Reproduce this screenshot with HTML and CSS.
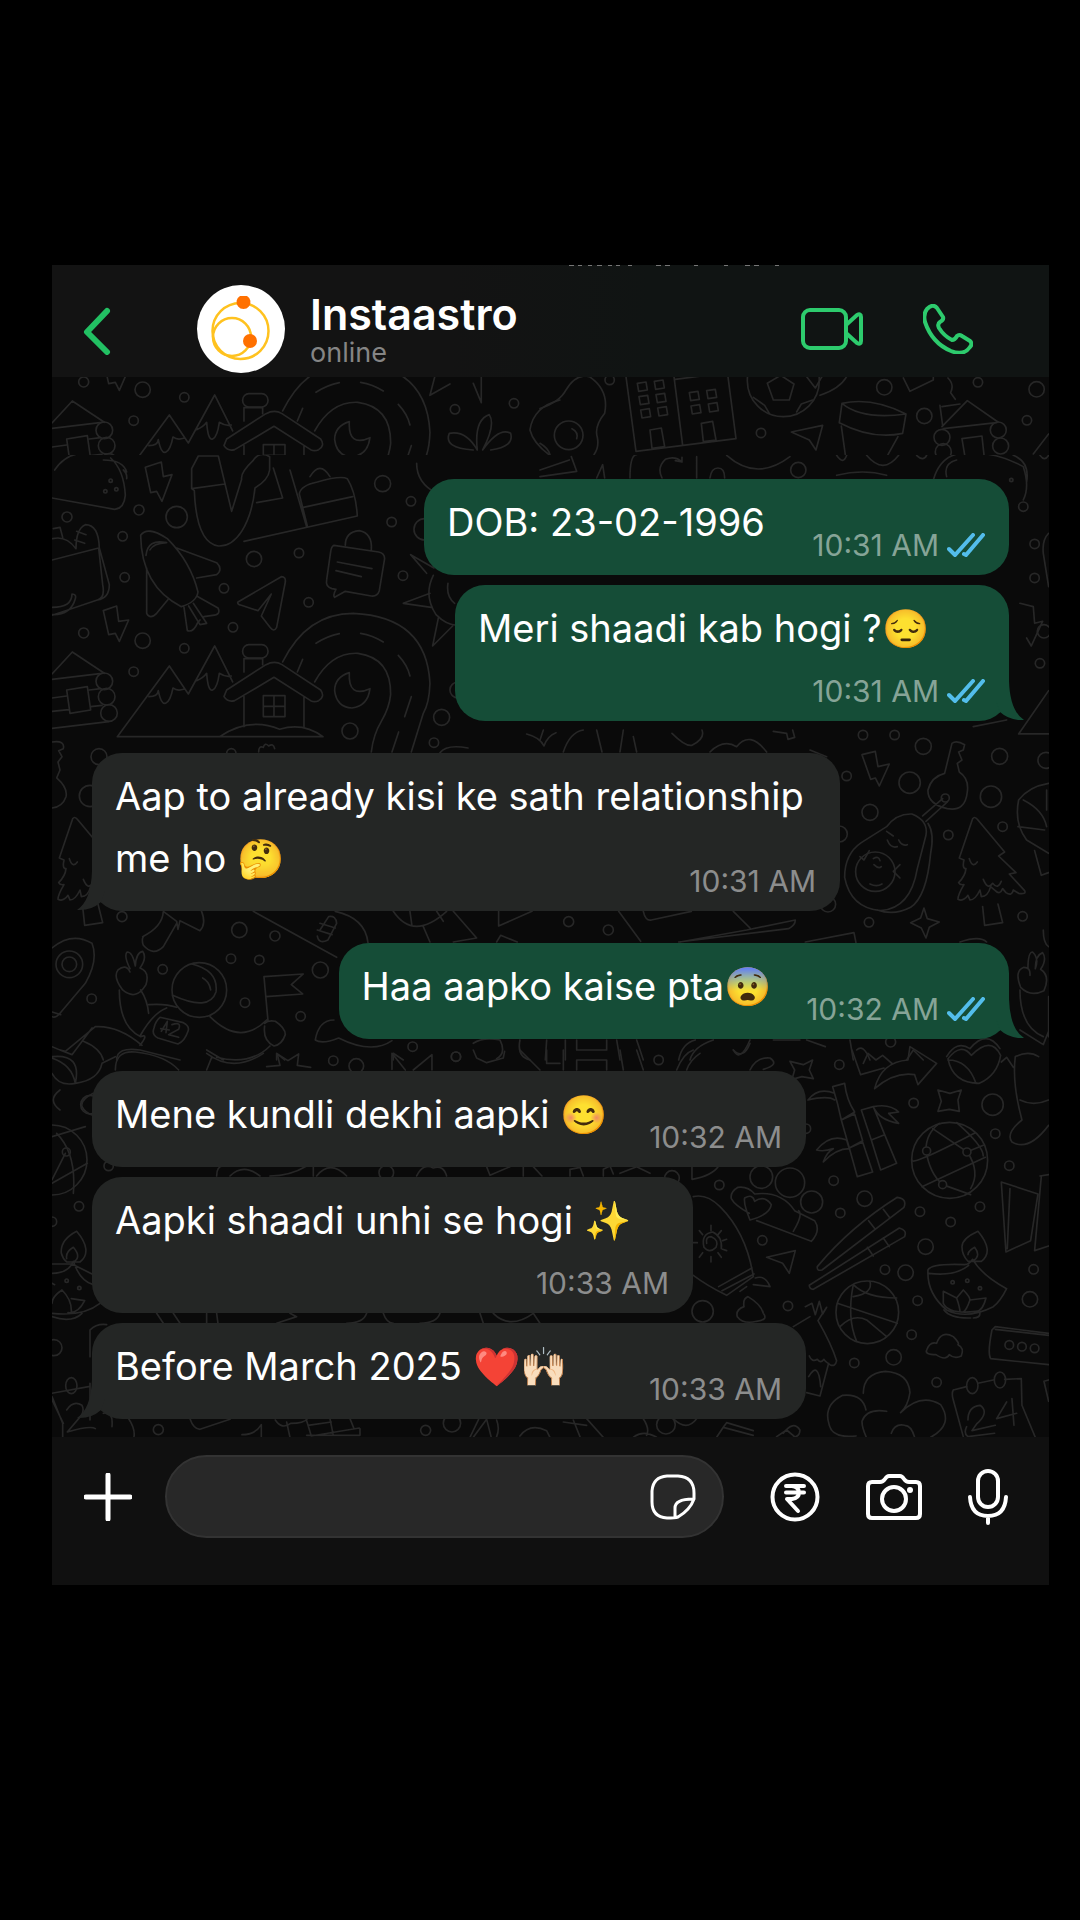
FILE: index.html
```html
<!DOCTYPE html>
<html lang="en">
<head>
  <meta charset="UTF-8" />
  <meta name="viewport" content="width=device-width, initial-scale=1.0" />
  <title>Instaastro</title>
  <link rel="stylesheet" href="styles.css">
</head>
<body>
  <main class="phone">
    <!-- Header -->
    <header class="header">
      <svg class="clipped" viewBox="0 0 212 1" aria-hidden="true"><path d="M1 .5h5m4 0h4m6 0h4m5 0h5m6 0h4m4 0h4m8 0h4m24 0h5m4 0h5m24 0h4m26 0h4m17 0h5m4 0h5m16 0h4" /></svg>
      <button class="icon-btn back" aria-label="Back">
        <svg width="28" height="52" viewBox="0 0 28 52"><path d="M24 8 4 29l20 20" /></svg>
      </button>
      <svg class="avatar" viewBox="0 0 88 88" role="img" aria-label="Instaastro logo">
        <circle cx="44" cy="44" r="44" fill="#fff" />
        <g fill="none" stroke="#ffc21f" stroke-width="2.5">
          <circle cx="43.500" cy="46" r="28" />
          <circle cx="35" cy="52" r="19" />
        </g>
        <path d="M43 11h7a7 7 0 1 1-7 0z" fill="#ff7000" />
        <circle cx="53" cy="56" r="7" fill="#ff7000" />
      </svg>
      <div class="who">
        <h1>Instaastro</h1>
        <p>online</p>
      </div>
      <button class="icon-btn" aria-label="Video call">
        <svg width="62" height="42" viewBox="0 0 62 42"><rect x="2" y="2" width="43" height="38" rx="7" /><path d="M45 17 56 7q4-2 4 2v24q0 4-4 2L45 25z" /></svg>
      </button>
      <button class="icon-btn call" aria-label="Voice call">
        <svg width="50" height="50" viewBox="0 0 50 50"><path d="M4 5Q10-1 14 4l6 9q1 3-3 5-3 2-1 6 5 8 13 12 3 0 5-4 2-2 5 0l8 5q3 3 0 6-6 9-19 4Q9 39 2 18 0 10 4 5z" /></svg>
      </button>
    </header>

    <!-- Conversation -->
    <section class="chat">
      <svg class="doodles" viewBox="52 377 997 1060" preserveAspectRatio="xMidYMin slice" aria-hidden="true">
        <defs>
          <clipPath id="top-strip"><rect x="52" y="377" width="997" height="78" /></clipPath>
          <clipPath id="main-area"><rect x="52" y="455" width="997" height="982" /></clipPath>
          <g id="village" transform="translate(40 470) scale(.3333)">
            <path d="M232 800 388 588l57 84 79-144 54 108M232 800h617q-60-44-130-22-90-38-180 22M327 680q26 0 28-18 8 42 22 38 14-6 22-46 12 10 32 4M470 632q20-8 30-22 4 56 18 50 14-6 20-50 18 12 36 8" />
            <path d="M612 680v90M792 680v92M612 606v-40h56v18M560 660l118-76q26-14 48 0l116 76q14 20-6 32-12 6-24 0L702 622 584 692q-20 6-32-12zM670 677h65v63h-65zM702 677v63M670 709h65" />
            <rect x="608" y="524" width="76" height="40" rx="19" />
            <path d="M728 576Q800 430 940 430q220 10 230 210-2 60-20 90l-36 116M824 636q50-90 130-86 100 14 98 124-4 40-28 80-24 40-30 92M828 520q34-22 70-29M962 490q36 6 68 26M1075 556q28 30 35 62M1114 680l-20 60M1076 786l-20 60M788 568l-16 38" />
            <path d="M928 608q-44 14-44 54 6 50 52 52 48-6 54-58-66 30-62-48z" />
            <path d="M36 612 97 546l96 64M36 628l150-18M36 775l170-20M80 660l62-10 10 70-62 10zM36 684l44-6M148 660l34-4M36 724l50-5M152 710l34-4" />
            <circle cx="193" cy="634" r="25" /><circle cx="200" cy="680" r="25" /><circle cx="207" cy="729" r="25" />
            <circle cx="308" cy="512" r="23" /><circle cx="131" cy="489" r="15" /><circle cx="433" cy="535" r="14" /><circle cx="281" cy="605" r="14" />
            <path d="m190 422 40-14 6 46 30-4-28 64-12-24-20 4z" />
          </g>
          <g id="tree">
            <path d="M58 384 98 266q6-8 14 2l82 98-18 12 52 50-20 4 46 50q6 12-18 8l-16-10q-4 20-22 8l-10-12q-8 20-22 6l-14-12q-8 30-28 30l-4-20q-14 30-30 30l-6-14q-14 20-30 12 0-14 18-44-12 2-16-6 20-20 22-42-12 0-6-26zM128 530l6 56 54-8-14-56M88 386q10 30 24 10M130 448q14 34 28 12 16 20 26-6" />
          </g>
        </defs>
        <g clip-path="url(#top-strip)">
          <use href="#village" y="-251" />
          <g transform="translate(540 250) scale(.3333)">
            <path d="m258 380 30 224 300-38-24-186M402 380l26 206M330 540l34-6 10 56-38 5zM484 520l34-6 10 56-38 5zM406 388l156-20" />
            <path d="m292 400 26-4 4 24-26 4zM343 394l26-4 4 24-26 4zM297 440l26-4 4 24-26 4zM348 434l26-4 4 24-26 4zM302 480l26-4 4 24-26 4zM353 474l26-4 4 24-26 4zM448 428l26-4 4 24-26 4zM500 422l26-4 4 24-26 4zM453 468l26-4 4 24-26 4zM505 462l26-4 4 24-26 4z" />
            <circle cx="730" cy="392" r="108" /><path d="m682 400 40-24 40 26-14 48h-48zM640 442l34 24 14 24M770 486l14-24 34-12M800 380l26 34 20-34M840 436q60-20 80-56" />
            <path d="M0 476q60-20 78-56 30-50 70-40 60 40 46 110-32 40-22 72 6 30-10 52M0 580q24 14 30 34" /><circle cx="86" cy="556" r="43" /><path d="M96 536q20 10 14 30" />
            <path d="M906 460q90-20 192 32l-10 58q-90 20-190-32zM906 460q60 50 192 32M904 528l12 86M1074 560l-30 54M754 546l94-20-20 74-20-30zM1090 384l20 40 70-34v-10M1224 384q20 20 8 44l14 20" />
            <path d="m1206 530 76-78 92 64M1210 536l160-18M1206 470l54-8M1266 566l60-8 6 56M1266 566l8 48M1200 466l8 60M1480 612l46-60" />
            <circle cx="1206" cy="562" r="24" /><circle cx="1375" cy="540" r="24" /><circle cx="1382" cy="588" r="24" /><circle cx="1210" cy="605" r="24" />
            <circle cx="209" cy="390" r="14" /><circle cx="663" cy="549" r="14" /><circle cx="1033" cy="412" r="23" /><circle cx="1153" cy="498" r="23" /><circle cx="1314" cy="397" r="14" /><circle cx="1461" cy="511" r="14" /><circle cx="1490" cy="418" r="23" />
          </g>
          <g transform="translate(40 250) scale(.3333)">
            <path d="m1184 382-14 54 60-34M1300 400l24 58V382M1300 600q-90-6-72-50 50-10 84 50-10-90 36-106 20 30-20 106 50-70 84-50 12 40-60 50M1560 450q-80 20-90 90 10 40 60 76" />
            <circle cx="1245" cy="478" r="14" /><circle cx="1422" cy="460" r="14" />
          </g>
        </g>
        <g clip-path="url(#main-area)">
          <use href="#village" />
          <!-- left edge: food, tools and the rocket -->
          <g transform="translate(40 470) scale(.3333)">
            <path d="M36 84 224 118q28-2 32-42-4-76-44-112M44 0q40-60 110-48M250 0q12 10 10 26M190-30q60 0 70 36M316-8l48-16 6 44 26-6-30 80-16-30-18 4z" />
            <path d="M455 56v-60l20-38h60l40 166 30-96q-4-20 34-56 20-30 50-12v40q-4 30-44 54-8 80-40 130-30 46-70 44-66-10-72-166zM455 56l100-14M612 214l340-76q-4-70-30-112-20-10-90 10-50 10-54 36l24 96M790 112l148-32M750 0l50 170M650 98l78-14-28-90M810 20q30-50 60 0" />
            <path d="M38 206q40-10 70 30 0-60 28-72 40 0 42 70l30 110q0 40-36 46L36 436M36 270l140-36 12 110q8 40-16 46M36 412q60 0 60-40 14 0 10 14-14 50-70 48M110 184l28 10M104 210l30 10M40 176l20-4 8 30" />
            <path d="M302 196q20-30 80 10 70 70 92 160-4 30-50 44-120-60-122-214zM318 256q6-50 60-38M330 240q10-20 50-22M410 234l120 44q20 20 0 36l-60 10M320 294v136q10 20 30 0l36-44M474 380l60 34q10 20-16 22l-26 4M432 412l10 70q18 6 30-22l8-10M460 400l40 60-20 4-34-56" />
            <path d="m594 396 130-76q14 0 12 16l-26 136q-8 16-20 0l-26-34 30-66-40 50-50-16q-14-4-10-10z" />
            <path d="M882 226 1016 246q18 4 18 20l-16 96q-6 18-24 16l-78-14-32 18q-6-6 4-24l-12-2q-20-6-16-26l12-84q2-16 10-20zM916 226q0-40 42-44 40 8 36 58M892 276l104 20M888 302l76 18" />
            <path d="M1180 316q-30 60 8 118 40 40 80 30M1160 310l-48-56 70 40M1170 370l-80 30 84 12M1196 440l-18 88 60-60M1224 340q-6 40 20 60M1130-20q0 60 60 90" />
            <circle cx="410" cy="141" r="32" /><circle cx="297" cy="120" r="15" /><circle cx="81" cy="141" r="15" /><circle cx="248" cy="199" r="14" /><circle cx="254" cy="322" r="14" /><circle cx="642" cy="267" r="23" /><circle cx="777" cy="249" r="14" /><circle cx="552" cy="355" r="14" /><circle cx="579" cy="472" r="14" /><circle cx="806" cy="397" r="14" /><circle cx="1089" cy="317" r="14" /><circle cx="1028" cy="41" r="24" /><circle cx="1113" cy="94" r="14" /><circle cx="1055" cy="156" r="14" /><circle cx="1154" cy="178" r="32" /><circle cx="930" cy="783" r="24" /><circle cx="1205" cy="742" r="24" /><circle cx="1182" cy="818" r="14" /><circle cx="1254" cy="660" r="24" />
            <circle cx="212" cy="32" r="5" /><circle cx="196" cy="64" r="5" /><circle cx="229" cy="58" r="5" />
          </g>
          <!-- strip right of and above the first bubble -->
          <g transform="translate(540 250) scale(.3333)">
            <path d="M0 660l88-30M0 680l110-16-16-44M270 684q0-70 20-70M170 684l18-40 6 40M560 616q90 80 190 4M426 636q-20-20-50-8-26 24-10 56M426 636l-20-4M426 636v-14M470 620v64M510 684q4-30 24-30t20 30M890 676q80-20 150 0M980 616q50 60 96 0M1180 690q20-70 80-80 100-10 190 40 20 60 0 100M1220 680q-10-40 30-50M1420 616q50 20 40 80M890 616q20 30 30 0M1130 616q20 20 30 0M1500 616q14 20 26 0" />
            <circle cx="775" cy="660" r="23" /><circle cx="1414" cy="690" r="5" /><circle cx="1450" cy="770" r="14" /><circle cx="1484" cy="882" r="14" /><circle cx="1484" cy="984" r="14" /><circle cx="1512" cy="1144" r="20" /><circle cx="1500" cy="1240" r="14" />
            <path d="M1440 1060l40 10 4 50 24-6-34 74-14-24M1526 850q-20 20-16 60l16 100M1436 1452l90-130M1436 1452h90M1300 1430l100-20" />
          </g>
          <!-- middle left: tree, map pin, astronaut -->
          <g transform="translate(40 730) scale(.3333)">
            <use href="#tree" />
            <path d="M36 36q40-6 34 20l-14 6 10 18-12 16 6 24-10 24q34 30 28 56-10 30-42 34M36 654q60-50 120-14 20 50-20 120l-76 90q-14 16-24 10M36 846l26 8" />
            <circle cx="88" cy="703" r="40" /><circle cx="88" cy="703" r="22" /><circle cx="177" cy="80" r="24" /><circle cx="150" cy="198" r="32" />
            <path d="M308 620q60-30 62-76M410 580l-40 70q-30 30-60-4-6-16 0-26M370 544l40 30 4 24 6-26 60 30q20-20 4-60" />
            <path d="M640 544l250 138M886 544q90 20 98 94M840 600l26-40q22-4 24 20l-26 50q-28 14-32-12M840 580l46 14M832 600l44 14M1060 544q60 90 160 0M1110 544l6 44M1190 544l20 30M1150 590l20 46M1240 544l70 80-70 12M1376 544v44l100-44M1370 636l12-20 50 20" />
            <path d="M270 716q-20-40-8-50 16 0 24 42 2-40 22-44 14 20-8 50 30 10 18 50-30 50-70 16-30-40-14-60 24-20 36 6M238 780q0 110 64 140 26-10-2 26M302 780q20 30 24 70M326 824q50-4 84 8M300 918q40-70 80-84" />
            <circle cx="478" cy="780" r="82" /><path d="M456 702q80 20 72 84-20 60-130 10M488 744q20 10 24 36M360 862l70 16q20 10 14 26-10 30-30 38l-60-18q-20-10-12-30 4-20 18-32zM364 904l18-30-4 34M362 896l26 4M396 884q30-10 20 14l-30 16 30 8" />
            <path d="M684 872 672 740l118-8-36 32 34 28-110 8M510 860q90 90 170 10M674 880q10-10 32-6 30 20 30 40-10 30-34 34-34-16-28-60M690 948q-60 60-160 34M36 950q20 10 40 14l90-74q70-4 140 56M60 960l36 14 60-80M130 934q50 20 60 56M230 990q0-40 70-30l120 30M500 960l50 30M826 930q10-60 56-60M826 930q20 14 70-6 100 50 160 8M1300 940q30-20 80-10 20 40-10 56M1440 930q-10 50 30 60M710 990v-20l24 20M1060 990v-20l30 20" />
            <circle cx="246" cy="560" r="15" /><circle cx="598" cy="600" r="23" /><circle cx="705" cy="618" r="15" /><circle cx="573" cy="686" r="14" /><circle cx="658" cy="690" r="14" /><circle cx="368" cy="718" r="14" /><circle cx="155" cy="806" r="14" /><circle cx="841" cy="720" r="24" /><circle cx="615" cy="818" r="14" /><circle cx="782" cy="859" r="14" /><circle cx="1118" cy="950" r="14" /><circle cx="1248" cy="980" r="14" /><circle cx="574" cy="70" r="14" />
            <path d="M656 66q0-20 14-14 4-16 16-4 14-10 18 8M1200 68q20-26 84-14M1460 12q40 10 52 36 10-30 36-40" />
          </g>
          <!-- middle right: key, avocado, tree -->
          <g transform="translate(540 730) scale(.3333)">
            <use href="#tree" x="1200" />
            <path d="M0 30 10 0M70 66q20-60 60-66M170 0l16 66M250 0l-10 66M280 20l10 46M396 10q40 40 60 36 40-20 30-46M510 66q40-40 80-16 40-50 90 16M700 4l40 6 4 18 20-6-6-22M810 60l50 20" />
            <path d="m966 74 40-10 8 46 34-8-30 66-12-24-14 4zM1164 180q10-40 50-50l22-90q14-10 38 4l-4 16-14 6 10 24-14 10 6 26q30 20 24 60-6 60-60 50-60-14-58-56zM1208 206l-60 52M1222 216l-64 58" />
            <circle cx="1216" cy="204" r="12" />
            <path d="M1040 290q30-40 76-38 50 20 42 64l-26 100q-20 120-110 126-90-8-108-100 0-70 50-104zM1164 280q20 30 8 90-12 130-60 162-50 26-100 8M1040 304l20 14M1042 330q10 26 30 20M1076 330q10 20 26 14M990 462q20 10 36 0M1000 386q16-10 20 6M1002 404q14 14 22 6M960 380l12 10 16-28M1080 404l-20 20 20 20" /><circle cx="1006" cy="425" r="59" />
            <path d="m1152 534 10 32 36 10-30 16-10 32-14-30-32-16 30-14zM1436 210q30-40 90-50M1436 210q-14 70 24 120l66 40M1434 290l80 10M1450 210q60 30 70 80M1520 180v60M1484 362l20 74 22-8" />
            <path d="M1510 600q0 40 16 50M1464 716q0-50 14-50 20 20 8 50 0-40 22-48 14 20-6 50 30 20 10 64-40 20-70-10-20-50 10-60 20 0 18 24M1440 780q0 110 70 140M1526 800v120M1440 900l70 44 16-40M236 544l66 90M310 544q6 30 24 26l120-26M580 544l50 50M416 636l330-40q20-10 20-26L620 600l-200 36M796 636l146-28 6 30M1260 636q60-20 80 0" />
            <path d="M16 990 20 930M76 990V930M110 930v30h90v-30M230 930l10 60M290 930l20 60M416 990q10-50 50-60M450 990q10-40 70-60M580 960q20 40 50-30M700 930h80M800 930l56 20M930 930l10 60M990 990q-20-50-40-30M1100 990l20-30 30 30M1220 980q30-50 70-24 50-60 90 0" />
            <circle cx="969" cy="15" r="14" /><circle cx="1064" cy="15" r="14" /><circle cx="1150" cy="49" r="24" /><circle cx="920" cy="138" r="14" /><circle cx="1109" cy="158" r="32" /><circle cx="990" cy="247" r="24" /><circle cx="898" cy="312" r="24" /><circle cx="1225" cy="315" r="14" /><circle cx="1353" cy="200" r="32" /><circle cx="1379" cy="79" r="24" /><circle cx="1518" cy="91" r="24" /><circle cx="1388" cy="290" r="14" /><circle cx="864" cy="523" r="23" /><circle cx="987" cy="577" r="14" /><circle cx="1448" cy="559" r="14" /><circle cx="86" cy="575" r="15" /><circle cx="205" cy="600" r="15" /><circle cx="1052" cy="936" r="15" />
          </g>
          <!-- bottom left -->
          <g transform="translate(40 1050) scale(.3333)">
            <path d="M36 20q90-10 70 80-50 10-70-30M36 24q60 20 70 76M106 100q70-10 80-60l40-20M226 60q0-60 60-54 90 10 130 54M500 10q80 60 170 0M516 20l-16 40M680 50l40-4-8-34 32 20 32-20-4 34 40 6M1056 58V10l40 50M1120 60l56-46v46M1300 0l10 24 30 14 50-14 4-20M1440 0l60 60M1520 0v40h40M60 120q-40 30 0 60M160 130q-40 20-34 40 10 20 34 26" />
            <circle cx="36" cy="330" r="105" /><path d="M36 260l100-30M36 400l106-60M50 250q60 60 50 180M36 390l40-80" /><circle cx="79" cy="306" r="12" />
            <path d="M64 610q-4-40 46-66 50 60 10 92h-40q-12-10-16-26zM80 626q-4-20 20-34 26 30 0 44M36 642h60l60 30M36 670q50 0 64-36 20 60 60 70M180 760q-50 40-144 30M36 760q0-20 30-40 30 30 28 66M94 746l40 6q-20 40-50 36M36 800q60 20 90-10M36 700l8 4M150 920v-80q20-20 50-16" /><circle cx="118" cy="714" r="5" /><circle cx="80" cy="692" r="5" />
            <path d="M530 378q0-30 20-30M570 378q40-40 90 0M690 378q60 0 110-30M820 378v-30M830 378q40-50 90 0M1130 378q20-40 50-24 30-10 40 24M1340 350l10 26 60-26M1450 378v-30M1480 350l26 28M350 790l20 30M400 790l20 30M500 820v-30M530 790l4 30M710 820l60-20-20-10M920 820q50 0 60-30M1030 790q10 30 30 30M1140 820q50 0 60-30M1320 790l10 30M1360 790q50 50 120 0l20 30" />
            <circle cx="117" cy="469" r="14" /><circle cx="42" cy="893" r="24" /><circle cx="206" cy="348" r="14" /><circle cx="150" cy="164" r="28" /><circle cx="880" cy="32" r="14" /><circle cx="949" cy="48" r="22" /><circle cx="1248" cy="20" r="14" /><circle cx="1039" cy="368" r="22" /><circle cx="36" cy="515" r="14" />
            <path d="M36 1030l110-20M36 1040l32 80v40M150 1000v110M80 1080q20-30 46-14 10 20-10 40l-34 40q70-20 84-10M190 1090q30-10 26 40M36 1050l34 70" /><ellipse cx="94" cy="1007" rx="17" ry="24" />
          </g>
          <!-- bottom right: bamboo, globe, chopsticks, ball, lamp -->
          <g transform="translate(540 1050) scale(.3333)">
            <path d="M70 60V0M110 60V30h90v30M240 0l10 60M290 0l20 60M410 60q20-50 50-60M440 60q10-30 40-50M580 0q30 30 50-20M630 60q20-40 60-36 30 20-20 34M750 34l40 10 28-14-10 30 12 26-34-6-30 8 8-28z" />
            <path d="M936 0l26 74 70-20M970 40l14-30 24 20 20-14 30 26M1004 116q20-80 100-86l6-40 80 50-56 64-10-30q-60-10-120 42zM1224 26q40-50 70-10 60-60 88 0-10 60-64 84-80 0-94-74zM1224 30q60 0 84 70M1384 36l16-14 20 30M1426 20q40-20 70 0M1426 20q-10 80 20 190-50 40-30 66 50 30 110-50M1440 150q40 20 86 0M1194 120l36 10 34-10-10 30 4 34-30-6-34 6 10-30z" />
            <path d="M878 110l36-10q6 50 30 86l-40 24q-10-50-26-100zM904 210l40-18 24 80-40 22zM928 294l40-18 30 90-46 14zM884 130q-50-20-80 20 60-14 80 0M830 300q40-50 90-30l8 26q-40 0-78 40 10-30 30-40-30 10-50 4M964 180l36-10 34 84-40 16zM994 270l40-16 36 86-48 20zM1000 170q50-10 76 16l-30 4 30 30q-60-10-76-50" />
            <circle cx="1229" cy="331" r="114" /><path d="M1116 330q-6 20 190-82M1146 410l190-88M1158 300q0-50 40-80M1158 300q10 70 50 104l84 30M1178 236l104 70q40 60 10 110M1280 306l50-20M1250 218q80 70 80 100" /><g class="joint"><circle cx="1160" cy="303" r="12" /><circle cx="1281" cy="306" r="12" /><circle cx="1208" cy="404" r="12" /></g>
            <path d="M90 378v-20l30-6 10 26M190 378v-20l20-10 10 24M240 370l50-20 40 20M456 350v38q60-10 80-40M460 440q40-10 80 30 80 80 100 210l-80 56q-60-30-100-60M536 710l100-56M546 722l96-50M646 684q30-10 44 26l-50-6M600 724l20-14" />
            <path d="M500 580q-4-20 14-20 24 10 14 32-20 20-36 0-10-40 26-46 30 14 26 50M513 526v16M513 620v16M560 568l-12 4M560 602l-12-4M478 542l10 12M544 542l-10 12M478 622l10-14M544 622l-10-14M460 578h12" />
            <path d="M574 446q-4-20 20-34 30-4 50 20 80-10 120 50l60 30q20 30-10 62L650 512M574 446q10 20 54 44M760 544q30-50 16-62M630 510q-20-50-16-66 24-14 30 10 30-20 50 10-4 30-64 46z" />
            <circle cx="664" cy="381" r="34" /><circle cx="750" cy="398" r="44" /><circle cx="815" cy="456" r="33" />
            <path d="M832 650q100-120 240-208 30 4 20 30L846 660q-16 4-14-10zM808 706l270-172q24 6 16 26L820 718q-12 0-12-12zM986 512l20 26M1030 478l20 26M982 592l18 26M1030 564l18 26M680 622l86-20-18 68-20-30z" />
            <path d="M592 800q-6-20 20-30-4-24 12-30 40 24 46 50 16 20-20 24-40 10-58-14zM796 770l20-10 10 34 12-40 10 38 12-20-26 40q40 70 56 120-4 20-20 12-16-10-18-16-10 14-20 0-16 10-24-10M760 830l50-30M866 940l-26 98-40-10M806 980q30-50 36 30" />
            <circle cx="982" cy="787" r="94" /><path d="M892 760l180 60M940 704q40 40 130 40M940 704q-20 100 10 170M900 830q40-40 80-20l60 50M940 740q60-10 50-46" />
            <path d="M1160 900q10-26 30-20 14-40 50-20 20 20 14 24 20 10 10 34-20 10-36-4-10 20-40 0-34 0-28-14z" />
            <path d="M1164 660q10-20 110-16 14 0 24-16 30 50 102 88-20 40-40 54-80 40-140 10-60-50-56-120zM1166 670q80 10 120-24M1266 590q0-24 48-46 50 60 10 90h-40q-18-20-18-44zM1284 614q0-10 20-22 20 26-4 40M1210 760v-36l40 20 20-24q20 20 20 30l48-6q-10 40-30 40-80 10-98-24zM1250 744q10 30 10 40M1290 750q-10 30-20 36M1212 780q20 26 80 24M1300 804q20 0 20-14" />
            <circle cx="1238" cy="697" r="5" /><circle cx="1282" cy="692" r="5" /><circle cx="1320" cy="715" r="5" />
            <path d="M1384 396l110 36-22 140-74 34zM1410 416l-8 180M1500 378l26-4M1504 380l-20 222 42-14M1526 850l-160-20-10 10q-14 70-4 86l174 18M1366 838l160 18" /><circle cx="1408" cy="885" r="13" /><circle cx="1446" cy="890" r="13" /><circle cx="1484" cy="895" r="13" />
            <path d="M978 1080q-10-50-70-44-60 30-40 90 10 40 80 32M970 1030q0-60 66-66 70 4 74 64-6 40-28 60M1082 1088q60-60 120-24 40 60-30 98M1040 1084q-60-10-74 30 0 20 14 50M1054 1150q10-30 40-24 20 0 30 36M1240 1020l40-10M1314 1000l46-10M1394 988l50-2 2 80 40 96M1240 1020q-6 10 0 30l30 110M1284 1110q0-40 36-44 30 20-10 56l-14 20 70-16M1400 1056l-30 50 60-16M1416 1046l6 80M1280 1130q-10 20 4 30l80-10" />
            <ellipse cx="1297" cy="1007" rx="17" ry="24" /><ellipse cx="1380" cy="990" rx="17" ry="24" /><path d="M1526 990l-14 4 14 60" />
            <circle cx="356" cy="30" r="14" /><circle cx="898" cy="44" r="14" /><circle cx="1121" cy="159" r="14" /><circle cx="1358" cy="164" r="32" /><circle cx="1366" cy="251" r="14" /><circle cx="1408" cy="347" r="14" /><circle cx="881" cy="392" r="14" /><circle cx="538" cy="405" r="14" /><circle cx="974" cy="446" r="23" /><circle cx="901" cy="489" r="14" /><circle cx="1140" cy="485" r="14" /><circle cx="1320" cy="470" r="14" /><circle cx="1232" cy="516" r="14" /><circle cx="1157" cy="590" r="23" /><circle cx="667" cy="571" r="14" /><circle cx="1035" cy="659" r="14" /><circle cx="1097" cy="668" r="23" /><circle cx="1133" cy="752" r="14" /><circle cx="1481" cy="658" r="14" /><circle cx="1470" cy="748" r="23" /><circle cx="744" cy="768" r="14" /><circle cx="488" cy="784" r="32" /><circle cx="1115" cy="854" r="14" /><circle cx="1061" cy="922" r="23" /><circle cx="943" cy="939" r="14" /><circle cx="1190" cy="997" r="14" /><circle cx="396" cy="384" r="22" /><circle cx="798" cy="236" r="14" />
          </g>
          <!-- sliver under the last bubble -->
          <g transform="translate(40 1400) scale(.3333)">
            <path d="M266 56q20 30 16 54M450 56q10 30 30 32l90-30M606 104q40 0 58-30v40M706 60q20 30 46 10 40 0 50-14M740 66l10 46M800 62l14 46 144-24M870 56l10 50M804 76l70-10M930 56l12 30M960 86v20H800M1290 112l26-54M1300 112l40-54 14 54M1370 60q10 26 0 50M1440 108q30-40 80-16l10 20M1570 66l70 10M1600 60l20 50M1640 56l50 56M1780 112q30-24 70 0M1810 56q20 30 10 50M1900 56q40 40 70 0M2030 112l20-30 90 24M2050 82l10-14 80 24M2210 110l30-20 24 20M2230 100q30-40 50-10 0 20-20 22" />
            <circle cx="355" cy="89" r="15" /><circle cx="1157" cy="91" r="15" /><circle cx="1236" cy="70" r="26" /><circle cx="1878" cy="74" r="28" />
          </g>
        </g>
      </svg>

      <div class="messages">
        <div class="bubble sent medium">
          <p>DOB: 23-02-1996</p>
          <div class="meta"><time>10:31 AM</time><svg class="ticks" viewBox="0 0 38 24" role="img" aria-label="Read"><path d="m2 16 6 6L26 2M17 21l2 1L36 2" /></svg></div>
        </div>
        <div class="bubble sent stacked">
          <p>Meri shaadi kab hogi ?😔</p>
          <div class="meta"><time>10:31 AM</time><svg class="ticks" viewBox="0 0 38 24" role="img" aria-label="Read"><path d="m2 16 6 6L26 2M17 21l2 1L36 2" /></svg></div>
          <svg class="tail" viewBox="0 0 28 40" aria-hidden="true"><path d="M13 0q1 30 15 39-14 1-24-8L0 20V0z" /></svg>
        </div>
        <div class="bubble received first overlap">
          <p>Aap to already kisi ke sath relationship me ho 🤔</p>
          <div class="meta"><time>10:31 AM</time></div>
          <svg class="tail" viewBox="0 0 28 40" aria-hidden="true"><path d="M13 0q1 30 15 39-14 1-24-8L0 20V0z" /></svg>
        </div>
        <div class="bubble sent first">
          <p>Haa aapko kaise pta😨</p>
          <div class="meta"><time>10:32 AM</time><svg class="ticks" viewBox="0 0 38 24" role="img" aria-label="Read"><path d="m2 16 6 6L26 2M17 21l2 1L36 2" /></svg></div>
          <svg class="tail" viewBox="0 0 28 40" aria-hidden="true"><path d="M13 0q1 30 15 39-14 1-24-8L0 20V0z" /></svg>
        </div>
        <div class="bubble received first wide">
          <p>Mene kundli dekhi aapki 😊</p>
          <div class="meta"><time>10:32 AM</time></div>
        </div>
        <div class="bubble received stacked">
          <p>Aapki shaadi unhi se hogi ✨</p>
          <div class="meta"><time>10:33 AM</time></div>
        </div>
        <div class="bubble received wide">
          <p>Before March 2025 ❤️🙌🏻</p>
          <div class="meta"><time>10:33 AM</time></div>
          <svg class="tail" viewBox="0 0 28 40" aria-hidden="true"><path d="M13 0q1 30 15 39-14 1-24-8L0 20V0z" /></svg>
        </div>
      </div>
    </section>

    <!-- Message box -->
    <footer class="composer">
      <button class="icon-btn plus" aria-label="Attach">
        <svg width="48" height="48" viewBox="0 0 48 48"><path d="M24 2v44M2 24h44" /></svg>
      </button>
      <div class="field">
        <input type="text" aria-label="Message" />
        <button class="icon-btn" aria-label="Stickers">
          <svg width="46" height="46" viewBox="0 0 46 46"><path d="M17 2h11q16 1 16 17v6Q40 36 28 43q-3 1-11 1Q2 43 2 28V17Q3 3 17 2zM43 25q-18 0-18 9v9" /></svg>
        </button>
      </div>
      <button class="icon-btn" aria-label="Payment">
        <svg width="50" height="50" viewBox="0 0 50 50"><circle cx="25" cy="25" r="22.500" /><path d="M16 14h18M16 20.500h18M16 14h6q7 1 7 6.500T22 27h-5l11 12" /></svg>
      </button>
      <button class="icon-btn" aria-label="Camera">
        <svg width="56" height="46" viewBox="0 0 56 46"><path d="M6 8h8q3 0 5-3 2-3 4-3h11q2 0 4 3 2 3 5 3h7q4 0 4 4v28q0 4-4 4H6q-4 0-4-4V12q0-4 4-4z" /><circle cx="28" cy="25" r="12" /><circle class="dot" cx="44" cy="16" r="3" /></svg>
      </button>
      <button class="icon-btn" aria-label="Record">
        <svg width="40" height="56" viewBox="0 0 40 56"><rect x="10" y="2" width="20" height="36" rx="10" /><path d="M2 28q1 19 18 19t18-19M20 47v7" /></svg>
      </button>
    </footer>
  </main>
</body>
</html>
```
FILE: styles.css
```css
* { box-sizing: border-box; }
body {
  margin: 0;
  padding: 265px 31px 0 52px;
  background: #000;
  color: #fff;
  font-family: Inter, "Liberation Sans", sans-serif;
}
h1, p { margin: 0; }
.phone { background: #0a0a0a; }

.icon-btn {
  display: block;
  flex: none;
  padding: 0;
  border: none;
  background: none;
}
.icon-btn svg {
  display: block;
  fill: none;
  stroke: #fff;
  stroke-width: 4;
  stroke-linecap: round;
  stroke-linejoin: round;
}

/* header */
.header {
  position: relative;
  display: flex;
  align-items: center;
  padding: 20px 76px 4px 31px;
  background: linear-gradient(to right, #131313 40%, #101413 60%);
}
.header .icon-btn svg { stroke: #2dcb6d; }
.header .back svg { stroke: #22c063; stroke-width: 6; }
.clipped {
  position: absolute;
  top: 0;
  left: 516px;
  width: 212px;
  height: 1px;
  stroke: #777;
}
.avatar {
  flex: none;
  width: 88px;
  height: 88px;
  margin: 0 25px 0 86px;
}
.who { flex: 1; }
.who h1 {
  font-size: 43px;
  font-weight: 600;
  line-height: 48px;
}
.who p {
  color: #858585;
  font-size: 27px;
  line-height: 30px;
}
.call { margin-left: 60px; }

/* conversation */
.chat {
  position: relative;
  overflow: hidden;
  background: #0a0a0a;
}
.doodles {
  position: absolute;
  inset: 0;
  width: 100%;
  height: 100%;
  fill: none;
  stroke: #272727;
  stroke-width: 5;
  stroke-linecap: round;
  stroke-linejoin: round;
}
.joint { fill: #0a0a0a; }
.messages {
  position: relative;
  display: flex;
  flex-direction: column;
  gap: 10px;
  padding: 102px 40px 18px;
}
.bubble {
  position: relative;
  display: flex;
  align-items: flex-end;
  justify-content: space-between;
  gap: 35px;
  max-width: 748px;
  padding: 12px 24px 14px 23px;
  border-radius: 30px;
}
.bubble p {
  margin-bottom: 8px;
  font-size: 38px;
  line-height: 62px;
}
.sent {
  align-self: flex-end;
  background: #154d37;
}
.received {
  align-self: flex-start;
  background: #242625;
}
.first { margin-top: 22px; }
.stacked {
  flex-direction: column;
  gap: 8px;
  min-width: 554px;
}
.stacked p { align-self: flex-start; }
.received.stacked { min-width: 601px; }
.overlap { display: grid; }
.overlap p, .overlap .meta { grid-area: 1 / 1; }
.overlap .meta { justify-self: end; }
.medium { min-width: 585px; }
.wide { min-width: 714px; }
.meta {
  display: flex;
  flex: none;
  align-items: center;
  gap: 8px;
  color: #8c8d8d;
  font-size: 30px;
  line-height: 32px;
}
.sent .meta { color: #86a497; }
.ticks {
  width: 38px;
  height: 24px;
  fill: none;
  stroke: #53bdeb;
  stroke-width: 4;
  stroke-linecap: round;
}
.tail {
  position: absolute;
  right: -15px;
  bottom: 0;
  width: 28px;
  height: 40px;
  fill: #154d37;
}
.received .tail {
  right: auto;
  left: -15px;
  fill: #242625;
  transform: scaleX(-1);
}

/* message box */
.composer {
  display: flex;
  align-items: center;
  gap: 46px;
  padding: 18px 41px 47px 32px;
  background: #101010;
}
.plus { margin-right: -13px; }
.plus svg { stroke-width: 5; }
.field {
  display: flex;
  flex: 1;
  align-items: center;
  min-width: 0;
  height: 83px;
  padding: 0 26px 0 28px;
  border: 2px solid #333;
  border-radius: 42px;
  background: #282828;
}
.field input {
  width: 100%;
  min-width: 0;
  border: none;
  outline: none;
  background: none;
  color: #fff;
  font: inherit;
  font-size: 38px;
}
.field svg { stroke-width: 3; }
.icon-btn .dot { fill: #fff; stroke: none; }
```
